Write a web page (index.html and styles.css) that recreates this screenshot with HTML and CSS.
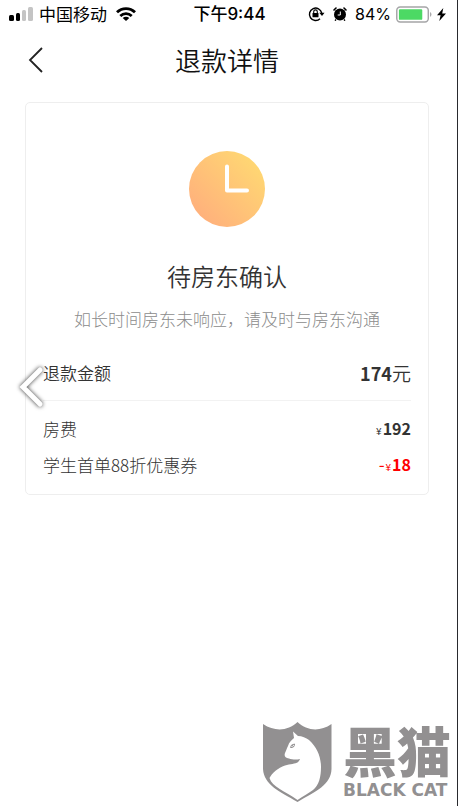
FILE: index.html
```html
<!DOCTYPE html>
<html lang="zh-CN">
<head>
<meta charset="utf-8">
<meta name="viewport" content="width=device-width, initial-scale=1">
<title>退款详情</title>
<link rel="stylesheet" href="styles.css">
</head>
<body>
<div class="page">
  <div class="status">
    <div class="status-left">
      <svg class="signal" width="24" height="14" viewBox="0 0 24 14" aria-hidden="true">
        <rect x="0" y="8" width="5" height="6" rx="1.5"/>
        <rect x="7" y="6" width="4" height="8" rx="1.5"/>
        <g fill="#c4c4c4"><rect x="13" y="3" width="4" height="11" rx="1.5"/><rect x="19" y="0" width="5" height="14" rx="1.5"/></g>
      </svg>
      <span>中国移动</span>
      <svg class="wifi" width="20" height="14" viewBox="0 0 20 14" aria-hidden="true">
        <g fill="none" stroke="#000" stroke-width="2.8"><path d="M1 5.300C6 .3 14 .3 19 5.300"/><path d="M4.300 8.900c3.300-3.100 8.100-3.100 11.400 0"/></g>
        <path d="M6.700 10.900c1.900-1.700 4.700-1.700 6.600 0L10 14z"/>
      </svg>
    </div>
    <time class="clock">下午9:44</time>
    <div class="status-right">
      <svg width="17" height="16" viewBox="0 0 17 16" aria-hidden="true">
        <path d="M12 12.700A6.200 6.200 0 1 1 13.700 7" fill="none" stroke="#000" stroke-width="1.400"/>
        <path d="M11.300 6.700H16.500L14 10z"/>
        <rect x="4.500" y="7" width="6" height="4.300" rx=".5"/>
        <path d="M5.700 7.500V5.700a1.800 1.800 0 0 1 3.600 0v1.800" fill="none" stroke="#000" stroke-width="1.100"/>
      </svg>
      <svg width="14" height="14" viewBox="0 0 14 14" aria-hidden="true">
        <circle cx="7" cy="7.500" r="6"/>
        <path d="M1 3 3 1M13 3 11 1" stroke="#000" stroke-width="1.600" stroke-linecap="round"/>
        <path d="M3 12.500 2 13.700M11 12.500l1 1.200" stroke="#000" stroke-width="1.300"/>
        <path d="M7.300 4.500V8H4.700" fill="none" stroke="#fff" stroke-width="1"/>
      </svg>
      <span class="percent">84%</span>
      <svg class="battery" width="36" height="17" viewBox="0 0 37 17" aria-hidden="true">
        <rect x=".8" y=".8" width="32.400" height="15.400" rx="3.500" fill="#fff" stroke="#a5a5a7" stroke-width="1.500"/>
        <rect x="3" y="3" width="24" height="11" rx="1" fill="#4cd964"/>
        <path d="M35 6c2 1 2 4 0 5z" fill="#a5a5a7"/>
      </svg>
      <svg width="9" height="13" viewBox="0 0 9 13" aria-hidden="true"><path d="M6.300 0 0 7.200h3.600L2.300 13 9 5.500H5.200z"/></svg>
    </div>
  </div>

  <header class="header">
    <button class="back" type="button" aria-label="返回">
      <svg width="15" height="26" viewBox="0 0 15 26" aria-hidden="true"><path d="M14 1 2 13l12 12" fill="none" stroke="#222" stroke-width="1.800"/></svg>
    </button>
    <h1>退款详情</h1>
  </header>

  <main class="card">
    <svg class="pending" width="76" height="76" viewBox="0 0 76 76" aria-hidden="true">
      <defs><linearGradient id="sun" x1=".1" y1=".85" x2=".85" y2=".15"><stop offset="0" stop-color="#ffb07c"/><stop offset="1" stop-color="#ffd673"/></linearGradient></defs>
      <circle cx="38" cy="38" r="38" fill="url(#sun)"/>
      <path d="M38 15.500V39.500h20" fill="none" stroke="#fff" stroke-width="4" stroke-linecap="round" stroke-linejoin="round"/>
    </svg>
    <h2>待房东确认</h2>
    <p class="hint">如长时间房东未响应，请及时与房东沟通</p>
    <dl class="bill">
      <div class="row total"><dt>退款金额</dt><dd><b>174</b>元</dd></div>
      <div class="row"><dt>房费</dt><dd><small>¥</small><b>192</b></dd></div>
      <div class="row discount"><dt>学生首单88折优惠券</dt><dd><i>-</i><small>¥</small><b>18</b></dd></div>
    </dl>
    <button class="previous" type="button" aria-label="上一张">
      <svg width="32" height="48" viewBox="0 0 32 48" aria-hidden="true"><path d="M25 7 8 24l17 17" fill="none" stroke="#fff" stroke-width="5" stroke-linecap="round"/></svg>
    </button>
  </main>

  <footer class="brand">
    <svg width="69" height="81" viewBox="0 0 69 81" aria-hidden="true">
      <path fill="#929091" d="M0 2C12 10 25 9 34.500 0 44 9 57 10 68.500 2V47C68 63 53 69 34.500 80 16 69 1 63 0 47z"/>
      <path fill="#fff" d="M30 9.500 35 14C39 14 43 16 46 18 54 25 58 35 58 45 58 55 56 63 50 68 46 71 40 74 34.500 78 22 69 9 65 6.500 56 9 51 15 46 22 43.500 29 41 35 43 37 37 33 38 29 37.500 26 36.500 22 36 21 34 22 31 23 29 23.500 27 25 24 26 20 29 18 31 16z"/>
      <path d="M27.500 25.500q0-3 4-3.500 0 4-4 3.500zM29 23l1.500 2" fill="none" stroke="#929091"/>
    </svg>
    <div class="brand-name"><strong>黑猫</strong><span>BLACK CAT</span></div>
  </footer>
</div>
</body>
</html>
```
FILE: styles.css
```css
* { box-sizing: border-box; }
body { margin: 0; background: #fff; color: #333; font: 300 17px/24px "Noto Sans CJK SC", sans-serif; }
h1, h2, p, dl, dd { margin: 0; }
svg { display: block; flex: none; }
button { border: 0; padding: 0; background: none; }
.page { min-height: 100vh; display: flex; flex-direction: column; border-right: 1px solid #292a2e; }

.status { display: grid; grid-template-columns: 1fr auto 1fr; align-items: center; height: 28px; padding: 0 11px 0 9px; color: #000; font-weight: 400; }
.status-left, .status-right { display: flex; align-items: center; }
.signal { margin-right: 6px; }
.wifi { margin-left: 9px; }
.clock { padding-left: 4px; font: 500 17px/24px Inter, "Noto Sans CJK SC", sans-serif; }
.status-right { justify-content: flex-end; gap: 8px; }
.percent { font: 400 16px/24px Inter, sans-serif; }
.battery { margin-left: -3px; margin-right: -3px; }

.header { display: grid; grid-template-columns: 28px 1fr 28px; align-items: center; height: 64px; padding: 0 28px 0 25px; color: #111; }
.back { padding-left: 3px; }
.header h1 { text-align: center; font-size: 26px; font-weight: 350; line-height: 36px; }

.card { position: relative; margin: 10px 28px 0 25px; padding: 48px 17px 11px; border: 1px solid #eee; border-radius: 5px; }
.pending { margin: 0 auto; }
.card h2 { margin-top: 31px; text-align: center; font-size: 24px; font-weight: 350; line-height: 36px; }
.hint { margin-top: 13px; text-align: center; color: #8c8c8c; white-space: nowrap; }
.bill { margin-top: 24px; }
.row { display: flex; justify-content: space-between; align-items: center; height: 36px; }
.row dd { display: flex; align-items: baseline; }
.row b { font-size: 16px; font-weight: 700; }
.row small { margin-right: 1px; font-size: 10px; font-weight: 400; }
.row i { margin-right: 1px; font-style: normal; font-weight: 400; }
.total { height: 46px; margin-bottom: 10px; padding-bottom: 10px; border-bottom: 1px solid #f2f2f2; font-weight: 350; }
.total dd { font-size: 19px; }
.total b { font-size: 18px; }
.discount dd { color: #f00; }
.previous { position: absolute; left: -11px; top: 260px; }
.previous svg { filter: drop-shadow(0 0 2px #333); }

.brand { display: flex; gap: 11px; margin-top: auto; justify-content: flex-end; align-items: flex-start; padding: 0 6px 3px 0; color: #929091; }
.brand-name { display: flex; flex-direction: column; }
.brand-name strong { font-size: 54px; line-height: 56px; font-weight: 900; }
.brand-name span { font: 700 17px/24px "DejaVu Sans", sans-serif; }
```
